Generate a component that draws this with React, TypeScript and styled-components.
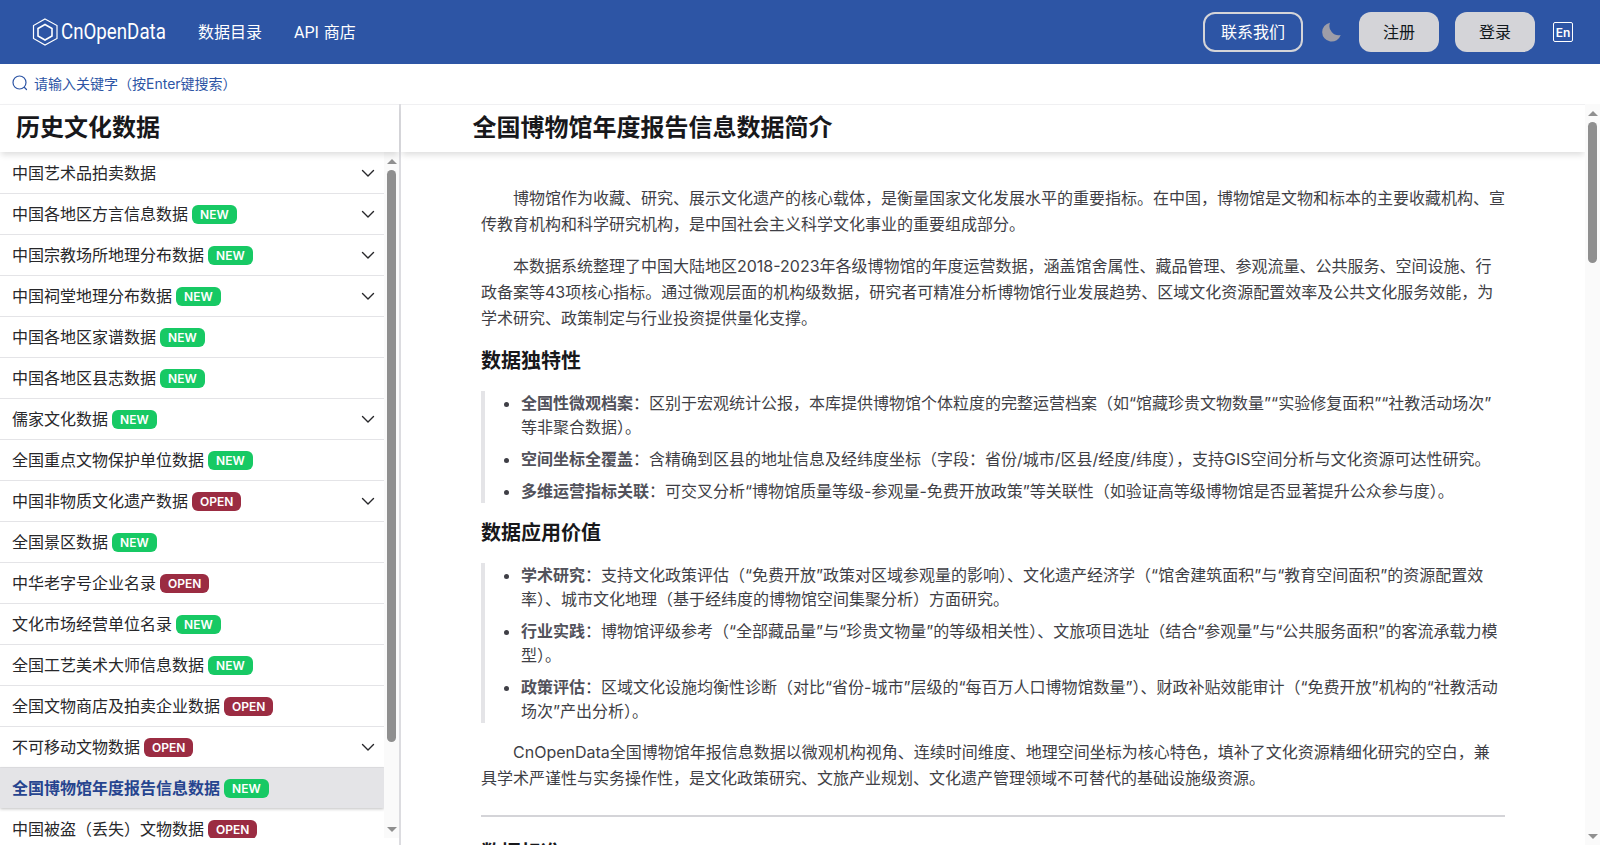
import React from "react";
import styled, { createGlobalStyle } from "styled-components";

const FONT = `Inter, "Noto Sans CJK SC", sans-serif`;

const Global = createGlobalStyle`
  html, body { margin: 0; padding: 0; height: 100%; background: #fff; overflow: hidden; }
  body { font-family: ${FONT}; color: #27272a; }
  * { box-sizing: border-box; }
`;

const Page = styled.div`
  height: 861px;
  display: flex;
  flex-direction: column;
`;
const Header = styled.header`
  height: 64px;
  flex: none;
  background: #2d55a5;
  display: flex;
  align-items: center;
  padding: 0 27px 0 32px;
  color: #fff;
`;
const Logo = styled.div`
  display: flex;
  align-items: center;
  gap: 3px;
  margin-right: 33px;
`;
const LogoText = styled.span`
  display: inline-block;
  width: 104px;
  font-family: Roboto, sans-serif;
  font-size: 22px;
  white-space: nowrap;
  transform: scaleX(0.85);
  transform-origin: left center;
  padding-bottom: 2px;
`;
const NavLink = styled.a`
  font-family: Roboto, "Noto Sans CJK SC", sans-serif;
  font-size: 16px;
  word-spacing: 1px;
  color: #fff;
  margin-right: 32px;
  padding-bottom: 2px;
`;
const Spacer = styled.div`
  flex: 1;
`;
const ContactBtn = styled.button`
  width: 100px;
  height: 40px;
  border: 2px solid #d4d4d8;
  border-radius: 12px;
  background: transparent;
  color: #fff;
  font: 16px ${FONT};
  padding: 0 0 2px;
  margin-right: 19px;
`;
const MoonIcon = styled.svg`
  width: 20px;
  height: 20px;
  flex: none;
  fill: #9d9da8;
  margin-right: 1px;
`;
const GrayBtn = styled.button`
  width: 80px;
  height: 40px;
  border: none;
  border-radius: 12px;
  background: #d4d4d8;
  color: #11181c;
  font: 16px ${FONT};
  padding: 0 0 2px;
  margin-left: 16px;
`;
const LangBox = styled.div`
  margin-left: 18px;
  width: 20px;
  height: 20px;
  border: 1px solid #fff;
  border-radius: 2px;
  font-size: 12px;
  font-weight: 600;
  display: flex;
  align-items: center;
  justify-content: center;
`;
const SearchBar = styled.div`
  height: 40px;
  flex: none;
  display: flex;
  align-items: center;
  gap: 6px;
  padding: 0 0 3px 12px;
  color: #2d55a5;
  font-size: 14px;
`;
const Main = styled.div`
  height: 741px;
  flex: none;
  display: flex;
`;
const Side = styled.aside`
  width: 401px;
  flex: none;
  border-right: 2px solid #dcdce0;
  display: flex;
  flex-direction: column;
`;
const TitleBar = styled.div`
  height: 48px;
  flex: none;
  display: flex;
  align-items: center;
  font-size: 24px;
  font-weight: 700;
  color: #18181b;
  padding-bottom: 6px;
  border-top: 1px solid #f0f0f2;
  box-shadow: 0 4px 6px -1px rgba(0, 0, 0, 0.13);
  position: relative;
  z-index: 2;
  background: #fff;
`;
const SideTitle = styled(TitleBar)`
  padding-left: 16px;
`;
const SideBody = styled.div`
  height: 686px;
  flex: none;
  display: flex;
`;
const SideList = styled.div`
  flex: 1;
  min-width: 0;
  overflow: hidden;
  padding-top: 1px;
`;
const Row = styled.div<{ $active?: boolean }>`
  height: ${(p) => (p.$active ? "40px" : "41px")};
  margin-bottom: ${(p) => (p.$active ? "1px" : "0")};
  display: flex;
  align-items: center;
  padding: 0 12px;
  font-size: 16px;
  border-bottom: ${(p) => (p.$active ? "0" : "1px solid #e4e4e7")};
  background: ${(p) => (p.$active ? "#e4e4e7" : "transparent")};
  color: ${(p) => (p.$active ? "#26448f" : "#27272a")};
  font-weight: ${(p) => (p.$active ? 700 : 400)};
  box-shadow: ${(p) => (p.$active ? "0 1px 3px rgba(0,0,0,.25)" : "none")};
  position: relative;
`;
const RowLabel = styled.span`
  padding-bottom: 2px;
`;
const Badge = styled.span<{ $kind: "NEW" | "OPEN" }>`
  margin-left: 4px;
  height: 19px;
  padding: 0 8px;
  border-radius: 6px;
  display: inline-flex;
  align-items: center;
  font-size: 12px;
  font-weight: 600;
  color: #fff;
  background: ${(p) => (p.$kind === "NEW" ? "#17c964" : "#9b2c42")};
`;
const Chevron = styled.span`
  margin-left: auto;
  margin-right: -3px;
  display: flex;
  color: #27272a;
`;
const Rail = styled.div`
  width: 15px;
  flex: none;
  background: #fafafa;
  display: flex;
  flex-direction: column;
  align-items: center;
`;
const RailArrow = styled.div<{ $down?: boolean }>`
  height: 18px;
  flex: none;
  display: flex;
  align-items: center;
  justify-content: center;
  &::before {
    content: "";
    border-left: 5px solid transparent;
    border-right: 5px solid transparent;
    ${(p) =>
      p.$down ? "border-top: 5px solid #8f8f8f;" : "border-bottom: 5px solid #8f8f8f;"}
  }
`;
const RailTrack = styled.div`
  flex: 1;
  width: 9px;
`;
const RailThumb = styled.div<{ $h: number }>`
  width: 9px;
  height: ${(p) => p.$h}px;
  border-radius: 5px;
  background: #8f8f8f;
`;
const Content = styled.main`
  flex: 1;
  min-width: 0;
  display: flex;
`;
const ContentScroll = styled.div`
  flex: 1;
  min-width: 0;
  overflow: hidden;
`;
const ContentTitle = styled(TitleBar)`
  padding-left: 71.5px;
`;
const Article = styled.article`
  padding: 33px 80px 0 80px;
  font-size: 16px;
  line-height: 26px;
  color: #3f3f46;
`;
const Para = styled.p`
  margin: 0 0 16px;
  text-indent: 2em;
`;
const H2 = styled.h2`
  margin: 0 0 16px;
  font-size: 20px;
  line-height: 28px;
  font-weight: 700;
  color: #18181b;
`;
const Quote = styled.ul`
  margin: 0 0 16px;
  padding: 0 0 0 36px;
  border-left: 4px solid #e4e4e7;
`;
const Li = styled.li`
  margin-bottom: 8px;
  line-height: 24px;
  &:last-child {
    margin-bottom: 0;
  }
  b {
    font-weight: 700;
    color: #52525b;
  }
`;
const Rule = styled.hr`
  border: none;
  height: 2px;
  background: #d4d4d8;
  margin: 24px 0 22px;
`;

type Item = { t: string; b?: "NEW" | "OPEN"; c?: boolean; a?: boolean };
const items: Item[] = [
  { t: "中国艺术品拍卖数据", c: true },
  { t: "中国各地区方言信息数据", b: "NEW", c: true },
  { t: "中国宗教场所地理分布数据", b: "NEW", c: true },
  { t: "中国祠堂地理分布数据", b: "NEW", c: true },
  { t: "中国各地区家谱数据", b: "NEW" },
  { t: "中国各地区县志数据", b: "NEW" },
  { t: "儒家文化数据", b: "NEW", c: true },
  { t: "全国重点文物保护单位数据", b: "NEW" },
  { t: "中国非物质文化遗产数据", b: "OPEN", c: true },
  { t: "全国景区数据", b: "NEW" },
  { t: "中华老字号企业名录", b: "OPEN" },
  { t: "文化市场经营单位名录", b: "NEW" },
  { t: "全国工艺美术大师信息数据", b: "NEW" },
  { t: "全国文物商店及拍卖企业数据", b: "OPEN" },
  { t: "不可移动文物数据", b: "OPEN", c: true },
  { t: "全国博物馆年度报告信息数据", b: "NEW", a: true },
  { t: "中国被盗（丢失）文物数据", b: "OPEN" },
];

const ChevronIcon = () => (
  <svg width="14" height="14" viewBox="0 0 14 14" fill="none" stroke="currentColor" strokeWidth="1.4" strokeLinecap="round" strokeLinejoin="round">
    <path d="M1.500 4.500 7 10l5.500-5.500" />
  </svg>
);

const Scrollbar = ({ thumb }: { thumb: number }) => (
  <Rail>
    <RailArrow />
    <RailTrack>
      <RailThumb $h={thumb} />
    </RailTrack>
    <RailArrow $down />
  </Rail>
);

export default function App() {
  return (
    <Page>
      <Global />
      <Header>
        <Logo>
          <svg width="26" height="28" viewBox="0 0 26 28" fill="none" stroke="#fff" strokeWidth="1.2">
            <path d="M13 1 25 7.500v13L13 27 1.500 20.500v-13z" />
            <path d="M13 6.500 20 10.500v7.500L13 22l-7-4v-7.500z" strokeWidth="1.6" />
          </svg>
          <LogoText>CnOpenData</LogoText>
        </Logo>
        <NavLink>数据目录</NavLink>
        <NavLink>API 商店</NavLink>
        <Spacer />
        <ContactBtn>联系我们</ContactBtn>
        <MoonIcon viewBox="0 0 20 20">
          <path d="M8 .7A9.500 9.500 0 1 0 18.700 13 9.300 9.300 0 0 1 8 .7z" />
        </MoonIcon>
        <GrayBtn>注册</GrayBtn>
        <GrayBtn>登录</GrayBtn>
        <LangBox>En</LangBox>
      </Header>
      <SearchBar>
        <svg width="16" height="16" viewBox="0 0 16 16" fill="none" stroke="currentColor" strokeWidth="1.2" strokeLinecap="round">
          <circle cx="7.500" cy="7.500" r="6.500" />
          <path d="M12.500 12.500 14.500 14.500" />
        </svg>
        请输入关键字（按Enter键搜索）
      </SearchBar>
      <Main>
        <Side>
          <SideTitle>历史文化数据</SideTitle>
          <SideBody>
            <SideList>
              {items.map((it) => (
                <Row key={it.t} $active={it.a}>
                  <RowLabel>{it.t}</RowLabel>
                  {it.b && <Badge $kind={it.b}>{it.b}</Badge>}
                  {it.c && (
                    <Chevron>
                      <ChevronIcon />
                    </Chevron>
                  )}
                </Row>
              ))}
            </SideList>
            <Scrollbar thumb={572} />
          </SideBody>
        </Side>
        <Content>
          <ContentScroll>
            <ContentTitle>全国博物馆年度报告信息数据简介</ContentTitle>
            <Article>
              <Para>博物馆作为收藏、研究、展示文化遗产的核心载体，是衡量国家文化发展水平的重要指标。在中国，博物馆是文物和标本的主要收藏机构、宣传教育机构和科学研究机构，是中国社会主义科学文化事业的重要组成部分。</Para>
              <Para>本数据系统整理了中国大陆地区2018-2023年各级博物馆的年度运营数据，涵盖馆舍属性、藏品管理、参观流量、公共服务、空间设施、行政备案等43项核心指标。通过微观层面的机构级数据，研究者可精准分析博物馆行业发展趋势、区域文化资源配置效率及公共文化服务效能，为学术研究、政策制定与行业投资提供量化支撑。</Para>
              <H2>数据独特性</H2>
              <Quote>
                <Li><b>全国性微观档案</b>：区别于宏观统计公报，本库提供博物馆个体粒度的完整运营档案（如“馆藏珍贵文物数量”“实验修复面积”“社教活动场次”<wbr />等非聚合数据）。</Li>
                <Li><b>空间坐标全覆盖</b>：含精确到区县的地址信息及经纬度坐标（字段：省份/城市/区县/经度/纬度），支持GIS空间分析与文化资源可达性研究。</Li>
                <Li><b>多维运营指标关联</b>：可交叉分析“博物馆质量等级-参观量-免费开放政策”等关联性（如验证高等级博物馆是否显著提升公众参与度）。</Li>
              </Quote>
              <H2>数据应用价值</H2>
              <Quote>
                <Li><b>学术研究</b>：支持文化政策评估（“免费开放”政策对区域参观量的影响）、文化遗产经济学（“馆舍建筑面积”与“教育空间面积”的资源配置效率）、城市文化地理（基于经纬度的博物馆空间集聚分析）方面研究。</Li>
                <Li><b>行业实践</b>：博物馆评级参考（“全部藏品量”与“珍贵文物量”的等级相关性）、文旅项目选址（结合“参观量”与“公共服务面积”的客流承载力模型）。</Li>
                <Li><b>政策评估</b>：区域文化设施均衡性诊断（对比“省份-城市”层级的“每百万人口博物馆数量”）、财政补贴效能审计（“免费开放”机构的“社教活动场次”产出分析）。</Li>
              </Quote>
              <Para>CnOpenData全国博物馆年报信息数据以微观机构视角、连续时间维度、地理空间坐标为核心特色，填补了文化资源精细化研究的空白，兼具学术严谨性与实务操作性，是文化政策研究、文旅产业规划、文化遗产管理领域不可替代的基础设施级资源。</Para>
              <Rule />
              <H2>数据标准</H2>
            </Article>
          </ContentScroll>
          <Scrollbar thumb={141} />
        </Content>
      </Main>
    </Page>
  );
}
